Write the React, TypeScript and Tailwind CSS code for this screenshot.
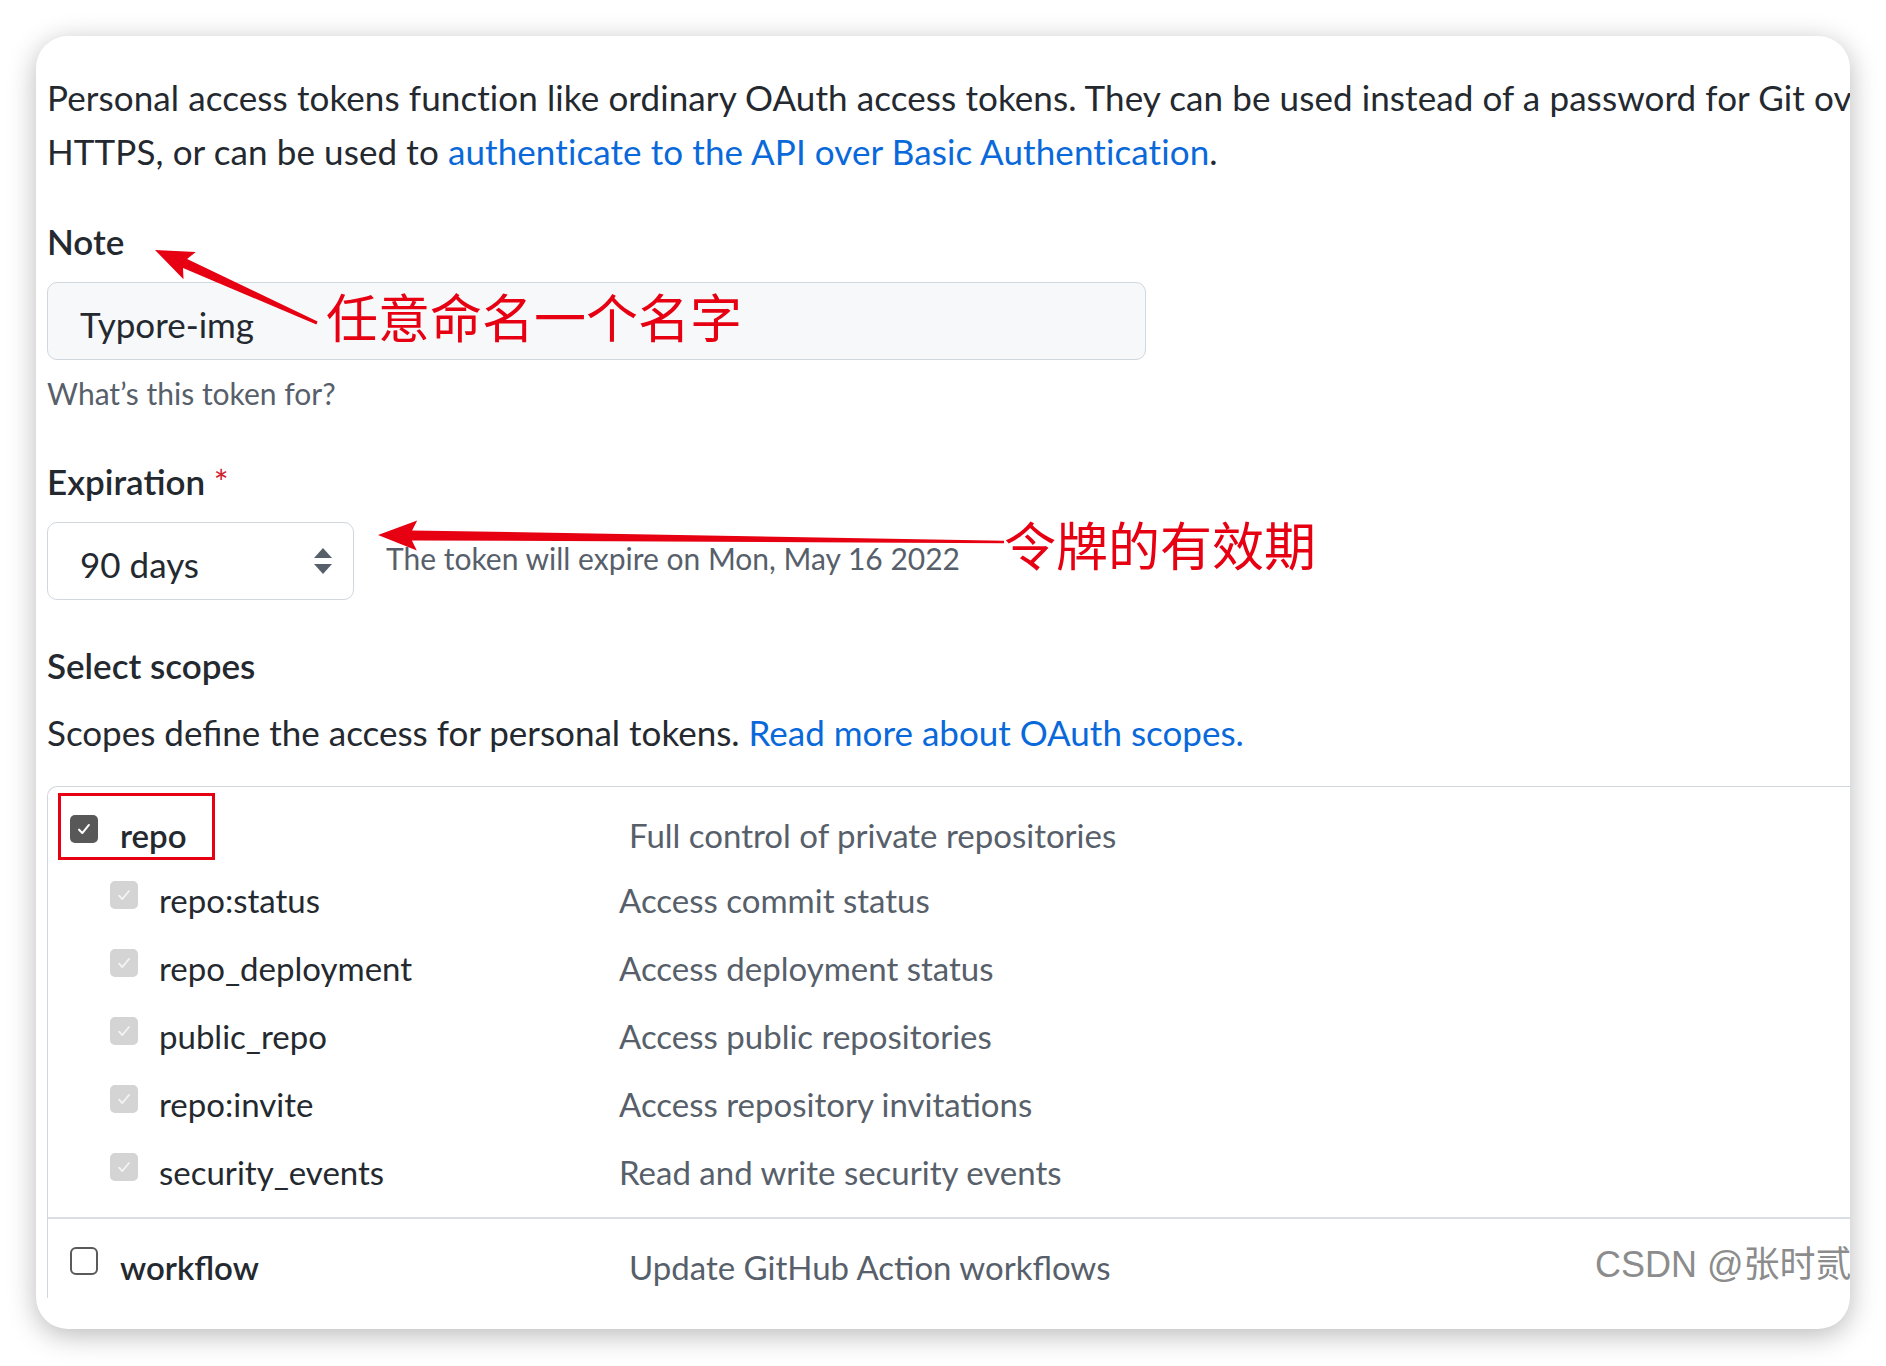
import React from "react";

type Pt = [number, number];

function arrowPoints(t: Pt, p: Pt, L: number, H: number, w1: number, w0: number, sweep = 5) {
  const dx = p[0] - t[0];
  const dy = p[1] - t[1];
  const len = Math.hypot(dx, dy);
  const ux = dx / len;
  const uy = dy / len;
  const nx = -uy;
  const ny = ux;
  const bx = p[0] - ux * L;
  const by = p[1] - uy * L;
  const pts: Pt[] = [
    [t[0] + nx * w0, t[1] + ny * w0],
    [bx + nx * w1, by + ny * w1],
    [bx - ux * sweep + nx * H, by - uy * sweep + ny * H],
    p,
    [bx - ux * sweep - nx * H, by - uy * sweep - ny * H],
    [bx - nx * w1, by - ny * w1],
    [t[0] - nx * w0, t[1] - ny * w0],
  ];
  return pts.map((q) => `${q[0].toFixed(1)},${q[1].toFixed(1)}`).join(" ");
}

function CheckDark() {
  return (
    <div className="w-[28px] h-[28px] rounded-[5px] bg-[#585858] flex items-center justify-center shrink-0">
      <svg viewBox="0 0 16 16" className="w-[18px] h-[18px]">
        <path d="M3.6 8.6l2.9 3 5.9-7.2" stroke="#ffffff" strokeWidth="1.8" fill="none" strokeLinecap="round" strokeLinejoin="round" />
      </svg>
    </div>
  );
}

function CheckDisabled() {
  return (
    <div className="w-[28px] h-[28px] rounded-[5px] bg-[#d4d4d4] flex items-center justify-center shrink-0">
      <svg viewBox="0 0 16 16" className="w-[18px] h-[18px]">
        <path d="M3.6 8.6l2.9 3 5.9-7.2" stroke="#f4f4f4" strokeWidth="1.6" fill="none" strokeLinecap="round" strokeLinejoin="round" />
      </svg>
    </div>
  );
}

function CheckEmpty() {
  return <div className="w-[28px] h-[28px] rounded-[6px] border-2 border-[#5a5a5a] bg-white shrink-0" />;
}

const subs: [string, string][] = [
  ["repo:status", "Access commit status"],
  ["repo_deployment", "Access deployment status"],
  ["public_repo", "Access public repositories"],
  ["repo:invite", "Access repository invitations"],
  ["security_events", "Read and write security events"],
];

export default function App() {
  const red = "#e60012";
  return (
    <div className="w-[1886px] h-[1366px] bg-white p-[36px] [font-family:Lato,'Noto_Sans_CJK_SC',sans-serif]">
      <div className="relative w-[1814px] h-[1293px] rounded-[32px] bg-white overflow-hidden shadow-[0_6px_28px_rgba(0,0,0,0.28)]">
        <div className="pl-[11px] pt-[34px] text-[#24292f]">
          <p className="text-[35px] leading-[54px] whitespace-nowrap tracking-[0.1px]">
            Personal access tokens function like ordinary OAuth access tokens. They can be used instead of a password for Git over
            <br />
            HTTPS, or can be used to <span className="text-[#0969da]">authenticate to the API over Basic Authentication</span>.
          </p>

          <div className="mt-[36px] text-[35px] leading-[54px] font-semibold">Note</div>
          <div className="mt-[14px] w-[1099px] h-[78px] rounded-[10px] border border-[#d0d7de] bg-[#f6f8fa] flex items-center pl-[32px] pt-[5px]">
            <span className="text-[35px] leading-[42px]">Typore-img</span>
          </div>
          <div className="mt-[11px] text-[30px] leading-[45px] text-[#57606a]">What’s this token for?</div>

          <div className="mt-[38px] text-[35px] leading-[54px] font-semibold">
            Expiration <span className="text-[#cf222e] font-normal">*</span>
          </div>
          <div className="mt-[14px] flex items-center">
            <div className="w-[307px] h-[78px] rounded-[10px] border border-[#d0d7de] bg-white flex items-center justify-between pl-[32px] pr-[20px] pt-[5px]">
              <span className="text-[35px] leading-[42px]">90 days</span>
              <svg viewBox="0 0 20 26" className="w-[20px] h-[26px] -mt-[5px]">
                <path d="M10 0L19 10H1Z" fill="#57606a" />
                <path d="M10 26L19 16H1Z" fill="#57606a" />
              </svg>
            </div>
            <div className="ml-[32px] pb-[5px] text-[30px] leading-[45px] text-[#57606a] whitespace-nowrap">
              The token will expire on Mon, May 16 2022
            </div>
          </div>

          <div className="mt-[38px] text-[35px] leading-[54px] font-semibold">Select scopes</div>
          <div className="mt-[13px] text-[35px] leading-[54px] whitespace-nowrap">
            Scopes define the access for personal tokens. <span className="text-[#0969da]">Read more about OAuth scopes.</span>
          </div>

          <div className="mt-[27px] w-[2000px] border-l border-t border-[#d0d7de] rounded-tl-[10px] text-[33px] leading-[68px]">
            <div className="pt-[10px] pb-[12px]">
              <div className="flex h-[68px] pl-[22px]">
                <div className="mt-[18px]">
                  <CheckDark />
                </div>
                <div className="ml-[22px] w-[509px] pt-[4px] font-semibold">repo</div>
                <div className="pt-[4px] text-[#57606a]">Full control of private repositories</div>
              </div>
              {subs.map(([name, desc]) => (
                <div key={name} className="flex h-[68px] pl-[62px]">
                  <div className="mt-[16px]">
                    <CheckDisabled />
                  </div>
                  <div className="ml-[21px] w-[460px] pt-[1px]">{name}</div>
                  <div className="pt-[1px] text-[#57606a]">{desc}</div>
                </div>
              ))}
            </div>
            <div className="border-t-2 border-[#d8dee4] pt-[11px]">
              <div className="flex h-[68px] pl-[22px]">
                <div className="mt-[17px]">
                  <CheckEmpty />
                </div>
                <div className="ml-[22px] w-[509px] pt-[3px] font-semibold">workflow</div>
                <div className="pt-[3px] text-[#57606a]">Update GitHub Action workflows</div>
              </div>
            </div>
          </div>
        </div>

        {/* annotations */}
        <svg className="absolute inset-0 pointer-events-none" width="1814" height="1293" viewBox="0 0 1814 1293">
          <polygon points={arrowPoints([281, 287], [119, 214], 33, 15, 5, 1.5)} fill={red} />
          <polygon points={arrowPoints([968, 506], [342, 499], 34, 15, 5, 1.2)} fill={red} />
          <rect x="23.5" y="758.5" width="154" height="64" fill="none" stroke={red} strokeWidth="3" />
        </svg>
        <div className="absolute left-[290px] top-[254px] text-[52px] leading-[52px] whitespace-nowrap text-[#e60012] [font-family:'Noto_Sans_CJK_SC',sans-serif]">
          任意命名一个名字
        </div>
        <div className="absolute left-[968px] top-[482px] text-[52px] leading-[52px] whitespace-nowrap text-[#e60012] [font-family:'Noto_Sans_CJK_SC',sans-serif]">
          令牌的有效期
        </div>
        <div className="absolute left-[1559px] top-[1211px] text-[36px] leading-[36px] whitespace-nowrap text-[#8c8c8c] [font-family:'Liberation_Sans','Noto_Sans_CJK_SC',sans-serif]">
          CSDN @张时贰
        </div>
      </div>
    </div>
  );
}
